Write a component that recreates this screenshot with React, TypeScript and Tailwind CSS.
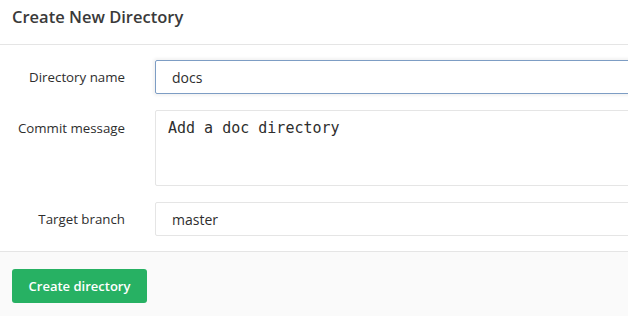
import React from "react";

export default function App() {
  const sans = { fontFamily: '"Open Sans", "Noto Sans", sans-serif' };
  return (
    <div className="w-[628px] h-[316px] overflow-hidden bg-white text-[#2e2e2e]" style={sans}>
      <div className="h-[45px] border-b border-[#e5e5e5] px-3 pt-[7px]">
        <h3 className="text-[16.5px] leading-5 font-semibold text-[#3a3a3a]">Create New Directory</h3>
      </div>
      <div className="flex flex-col gap-4 pt-[15px] pb-[15px]">
        <div className="flex">
          <label className="w-[125px] shrink-0 text-right text-[13.3px] leading-5 pt-[7px]">Directory name</label>
          <div className="ml-[30px] flex-1 -mr-3">
            <div className="h-[34px] border border-[#7d9dc4] rounded-[2px] shadow-[0_0_3px_2px_rgba(0,0,0,0.05)] pl-4 flex items-center text-[14px]">docs</div>
          </div>
        </div>
        <div className="flex">
          <label className="w-[125px] shrink-0 text-right text-[13.3px] leading-5 pt-2">Commit message</label>
          <div className="ml-[30px] flex-1 -mr-3">
            <div
              className="h-[76px] border border-[#e5e5e5] rounded-[2px] pl-3 pt-[7px] text-[15px] leading-5"
              style={{ fontFamily: '"DejaVu Sans Mono", "Liberation Mono", monospace' }}
            >
              Add a doc directory
            </div>
          </div>
        </div>
        <div className="flex">
          <label className="w-[125px] shrink-0 text-right text-[13.3px] leading-5 pt-[7px]">Target branch</label>
          <div className="ml-[30px] flex-1 -mr-3">
            <div className="h-[34px] border border-[#e5e5e5] rounded-[2px] pl-4 flex items-center text-[14px]">master</div>
          </div>
        </div>
      </div>
      <div className="border-t border-[#e5e5e5] bg-[#fafafa] h-[80px] px-3 pt-[17px] flex items-start">
        <button className="h-[34px] w-[135px] rounded-[3px] bg-[#27b163] text-white text-[13px] font-semibold leading-none">
          Create directory
        </button>
      </div>
    </div>
  );
}
